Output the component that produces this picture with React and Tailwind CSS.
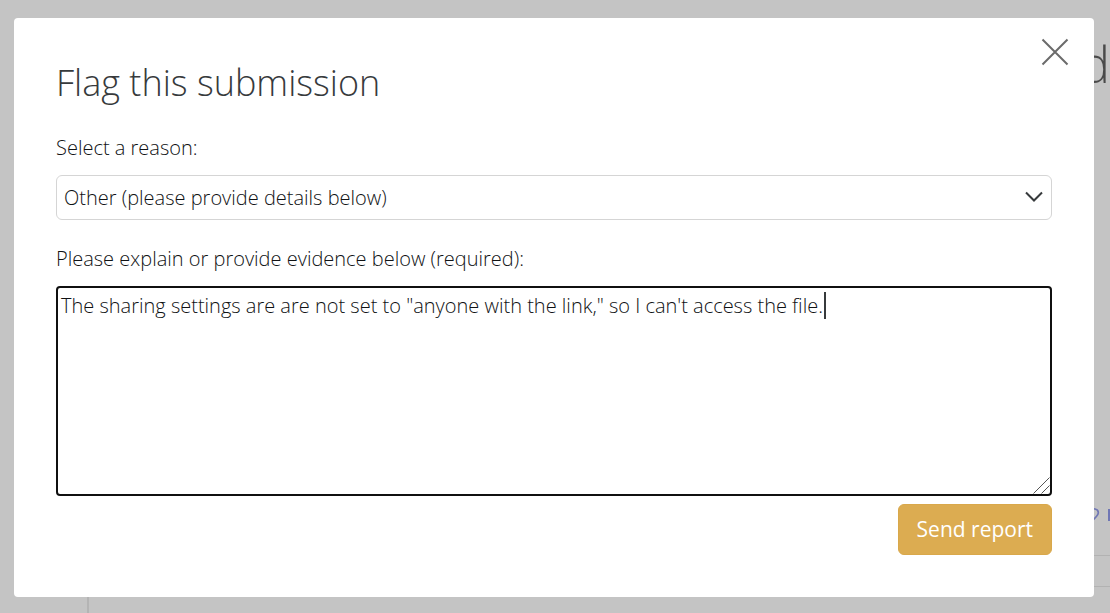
import React, { useState } from 'react';

function PageBehind() {
  return (
    <div aria-hidden="true" className="flex h-screen flex-col overflow-hidden">
      <div className="flex h-[494px] justify-end pt-8">
        <span className="text-[50px] leading-[64px] font-light text-[#4a4a4a]">d</span>
      </div>
      <div className="flex h-[61px] items-start justify-end overflow-hidden pt-2">
        <svg viewBox="0 0 24 24" className="mt-1 mr-2 h-5 w-5 shrink-0" fill="none" stroke="#6f76b4" strokeWidth="2">
          <path d="M12 20C5 14 2 11 2 8c0-5 7-6 10-2 3-4 10-3 10 2 0 3-3 6-10 12z" />
        </svg>
        <span className="mt-[7px] h-3 w-0.5 bg-[#6f76b4]" />
      </div>
      <div className="ml-[87px] h-8 shrink-0 border-y border-[#b2b2b2]" />
      <div className="ml-[87px] grow border-l-2 border-[#b4b4b4]" />
    </div>
  );
}

export default function App() {
  const [reason, setReason] = useState('other');
  const [details, setDetails] = useState(
    'The sharing settings are are not set to "anyone with the link," so I can\'t access the file.'
  );
  const [edited, setEdited] = useState(false);

  return (
    <div className="min-h-screen bg-[#c4c4c4] font-['Open_Sans',sans-serif] font-light text-[#101214]">
      <PageBehind />
      <div className="fixed inset-0 overflow-auto pt-[18px] pr-4 pb-4 pl-[14px]">
        <form
          role="dialog"
          aria-labelledby="flag-title"
          onSubmit={(e) => e.preventDefault()}
          className="relative rounded bg-white px-[42px] pt-10 pb-[42px]"
        >
          <button type="button" aria-label="Close" className="absolute top-5 right-[25px] flex h-7 w-7 items-center justify-center">
            <svg viewBox="0 0 28 28" className="h-7 w-7" fill="none" stroke="#6b6b6b" strokeWidth="2">
              <path d="M1.5 1.5l25 25M26.5 1.5l-25 25" />
            </svg>
          </button>
          <h1 id="flag-title" className="text-[36px] leading-[50px] text-[#373a3c]">Flag this submission</h1>
          <label htmlFor="reason" className="mt-6 block text-xl leading-8">Select a reason:</label>
          <div className="relative mt-[11px]">
            <select
              id="reason"
              value={reason}
              onChange={(e) => setReason(e.target.value)}
              className="block h-[45px] w-full appearance-none rounded-md border border-[#d5d5d5] bg-white px-[7px] text-xl"
            >
              <option value="other">Other (please provide details below)</option>
            </select>
            <svg viewBox="0 0 18 12" className="pointer-events-none absolute top-4 right-[9px] h-3 w-[18px]" fill="none" stroke="#373a3c" strokeWidth="2">
              <path d="M1 1.5l8 8 8-8" />
            </svg>
          </div>
          <label htmlFor="details" className="mt-[23px] block text-xl leading-8">
            Please explain or provide evidence below (required):
          </label>
          <div className="relative mt-[11px]">
            <textarea
              id="details"
              value={details}
              onChange={(e) => {
                setDetails(e.target.value);
                setEdited(true);
              }}
              className="block h-[210px] w-full resize-none rounded border-2 border-[#101010] bg-white px-[3px] py-1 text-xl leading-7 outline-none"
            />
            {!edited && <span className="pointer-events-none absolute top-[6px] left-[768px] h-[27px] w-0.5 bg-[#373a3c]" />}
            <svg viewBox="0 0 17 17" className="pointer-events-none absolute right-[2px] bottom-[2px] h-[17px] w-[17px]" fill="none" stroke="#555" strokeWidth="1">
              <path d="M0.5 16.5l16-16M8.5 16.5l8-8" />
            </svg>
          </div>
          <div className="mt-2 flex justify-end">
            <button type="submit" className="h-[51px] rounded-md border border-[#d9a84b] bg-[#dcac51] px-[18px] pb-px text-[21px] leading-8 font-normal text-white">
              Send report
            </button>
          </div>
        </form>
      </div>
    </div>
  );
}
